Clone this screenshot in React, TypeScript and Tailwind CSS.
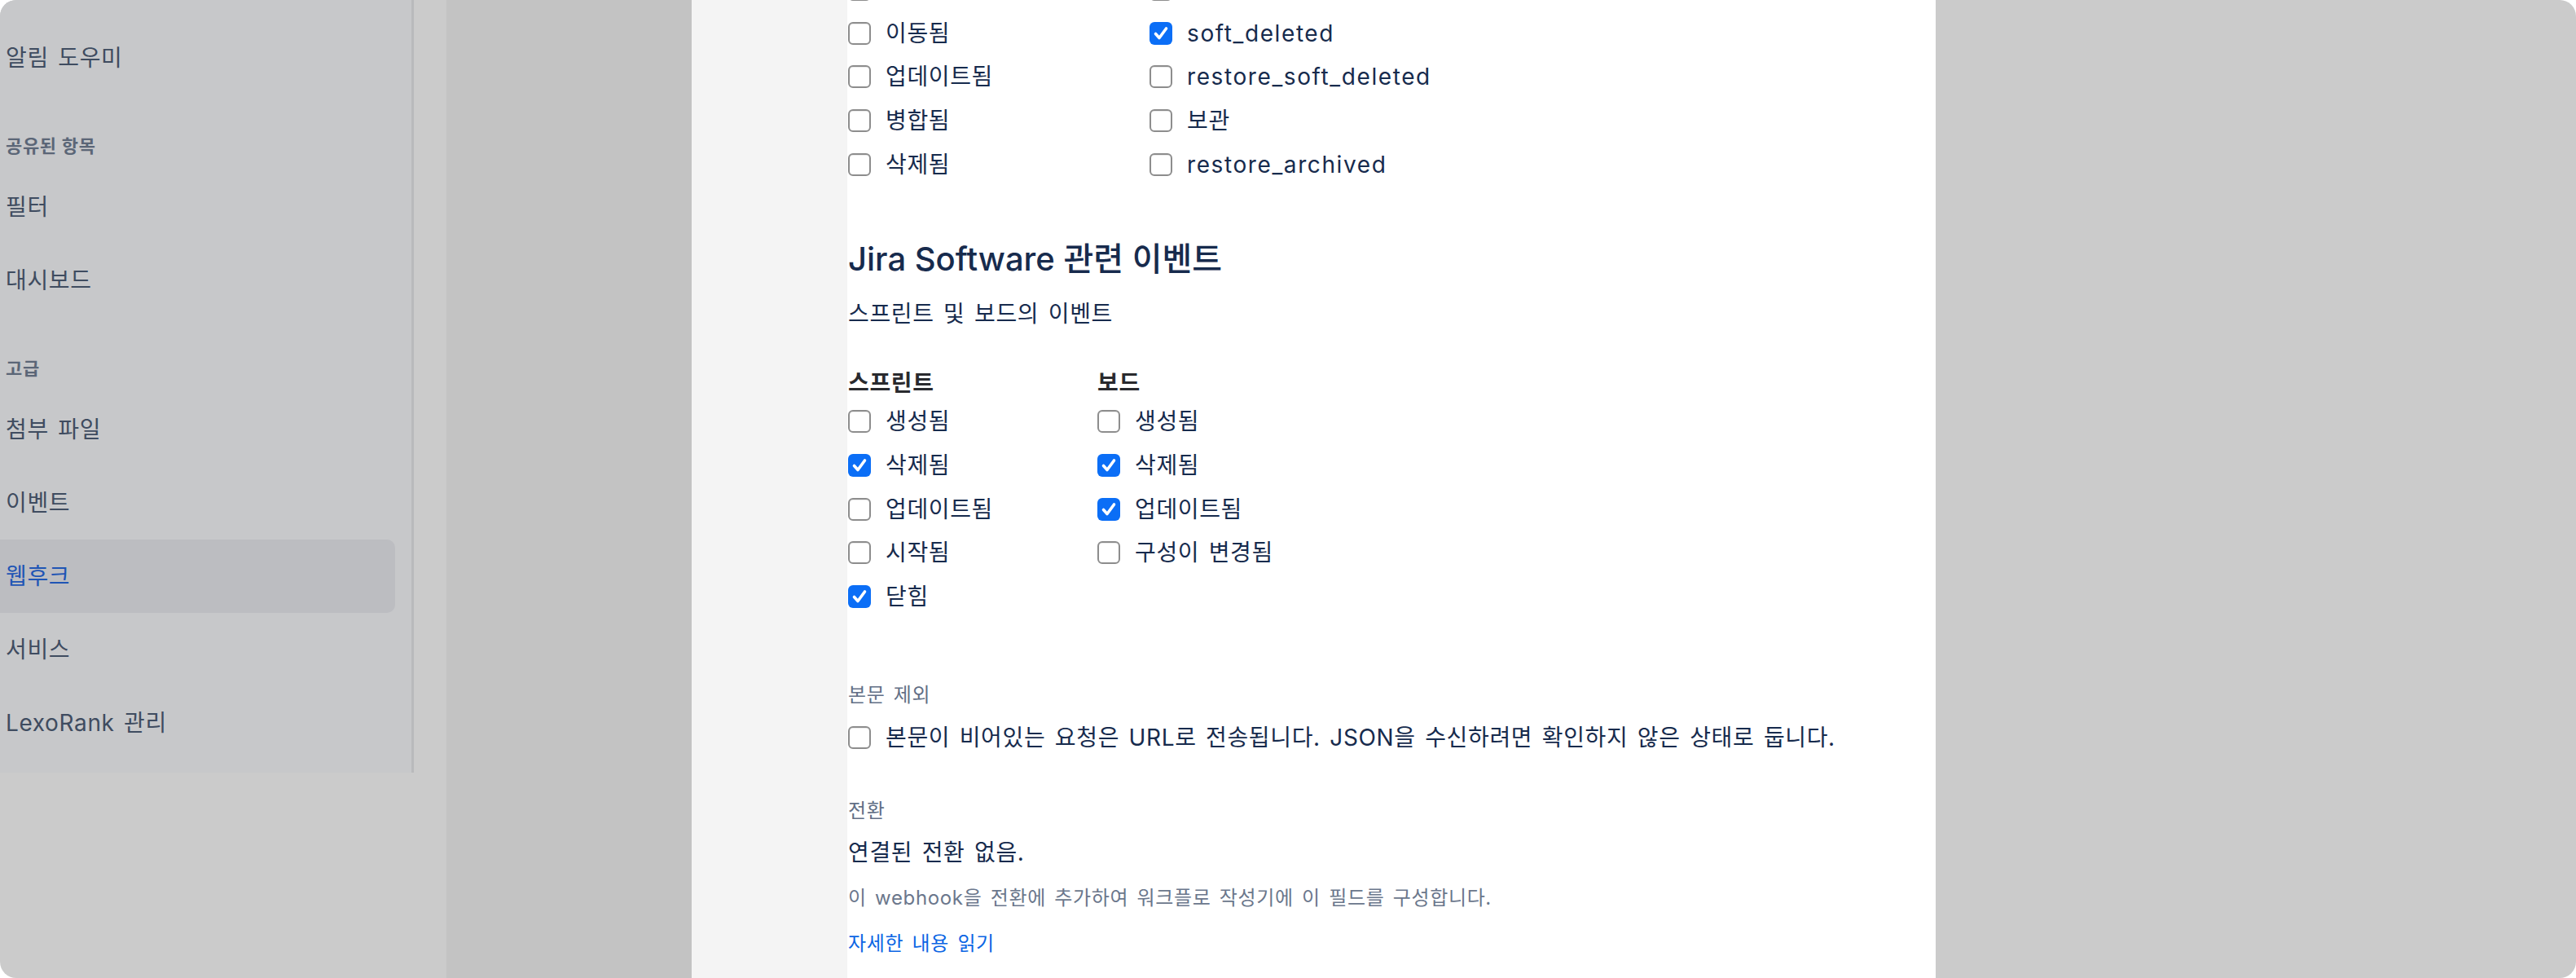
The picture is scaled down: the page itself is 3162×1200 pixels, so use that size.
import React from 'react';

type Item = { label: string; checked?: boolean; latin?: boolean };

const Box: React.FC<{ checked?: boolean }> = ({ checked }) =>
  checked ? (
    <span className="flex h-[28px] w-[28px] shrink-0 items-center justify-center rounded-[6px] bg-[#0b6ef6]">
      <svg viewBox="0 0 28 28" className="h-[28px] w-[28px]">
        <path d="M7.5 14.5 L12 19.5 L20.5 8" fill="none" stroke="#ffffff" strokeWidth="3.6" strokeLinecap="round" strokeLinejoin="round" />
      </svg>
    </span>
  ) : (
    <span className="h-[28px] w-[28px] shrink-0 rounded-[6px] border-[2.5px] border-[#8d8d8d] bg-white shadow-[inset_0_1px_1px_rgba(0,0,0,0.08)]" />
  );

const Row: React.FC<Item> = ({ label, checked, latin }) => (
  <div className="flex h-[53.7px] items-center gap-[18px] text-[28px] leading-[36px] text-[#172b4d]">
    <Box checked={checked} />
    <span className={latin ? 'whitespace-nowrap tracking-[1.6px]' : 'whitespace-nowrap [word-spacing:3px]'}>{label}</span>
  </div>
);

const NavItem: React.FC<{ label: string; active?: boolean }> = ({ label, active }) => (
  <div
    className={
      active
        ? 'flex h-[90px] items-center rounded-r-[10px] bg-[#bcbdc1] pl-[7px] text-[28px] text-[#1f55b5]'
        : 'flex h-[90px] items-center pl-[7px] text-[28px] text-[#3f4c60] [word-spacing:3px]'
    }
  >
    {label}
  </div>
);

const NavHeading: React.FC<{ label: string }> = ({ label }) => (
  <div className="flex h-[93px] items-end pb-[16px] pl-[7px] text-[22px] font-semibold leading-[28px] text-[#5b6677]">
    {label}
  </div>
);

const issueLeft: Item[] = [
  { label: '생성됨' },
  { label: '이동됨' },
  { label: '업데이트됨' },
  { label: '병합됨' },
  { label: '삭제됨' },
];

const issueRight: Item[] = [
  { label: '복원됨' },
  { label: 'soft_deleted', checked: true, latin: true },
  { label: 'restore_soft_deleted', latin: true },
  { label: '보관' },
  { label: 'restore_archived', latin: true },
];

const sprint: Item[] = [
  { label: '생성됨' },
  { label: '삭제됨', checked: true },
  { label: '업데이트됨' },
  { label: '시작됨' },
  { label: '닫힘', checked: true },
];

const board: Item[] = [
  { label: '생성됨' },
  { label: '삭제됨', checked: true },
  { label: '업데이트됨', checked: true },
  { label: '구성이 변경됨' },
];

export default function App() {
  return (
    <div className="h-[1200px] w-[3162px] bg-white font-['Inter','Noto_Sans_CJK_KR',sans-serif] tracking-[0.04em]">
      <div className="flex h-full overflow-hidden rounded-[20px]">
        {/* left rail with settings sidebar */}
        <div className="w-[548px] shrink-0 bg-[#cbcbcb]">
          <div className="h-[948px] w-[508px] border-r-[3px] border-[#b9babc] bg-[#c7c8ca] pr-[20px] pt-[26px]">
            <NavItem label="알림 도우미" />
            <NavHeading label="공유된 항목" />
            <NavItem label="필터" />
            <NavItem label="대시보드" />
            <NavHeading label="고급" />
            <NavItem label="첨부 파일" />
            <NavItem label="이벤트" />
            <NavItem label="웹후크" active />
            <NavItem label="서비스" />
            <NavItem label="LexoRank 관리" />
          </div>
        </div>

        <div className="w-[301px] shrink-0 bg-[#c3c3c3]" />

        {/* dialog */}
        <div className="flex w-[1527px] shrink-0">
          <div className="w-[191px] shrink-0 bg-[#f4f4f4]" />
          <div className="flex-1 bg-white pl-px">
            <div className="-mt-[40px] grid grid-cols-[370px_1fr]">
              <div>
                {issueLeft.map((i) => (
                  <Row key={i.label} {...i} />
                ))}
              </div>
              <div>
                {issueRight.map((i) => (
                  <Row key={i.label} {...i} />
                ))}
              </div>
            </div>

            <h2 className="mt-[66px] text-[40px] font-medium leading-[48px] tracking-[0px] text-[#172b4d]">
              Jira Software 관련 이벤트
            </h2>
            <p className="mt-[23px] text-[28px] leading-[40px] text-[#172b4d] [word-spacing:3px]">스프린트 및 보드의 이벤트</p>

            <div className="mt-[45px] grid grid-cols-[306px_1fr]">
              <div>
                <div className="text-[28px] font-bold leading-[40px] text-[#292a2e]">스프린트</div>
                {sprint.map((i) => (
                  <Row key={i.label} {...i} />
                ))}
              </div>
              <div>
                <div className="text-[28px] font-bold leading-[40px] text-[#292a2e]">보드</div>
                {board.map((i) => (
                  <Row key={i.label} {...i} />
                ))}
              </div>
            </div>

            <div className="mt-[78px] text-[24px] leading-[32px] text-[#626f86] [word-spacing:3px]">본문 제외</div>
            <div className="mt-[16px] flex h-[40px] items-center gap-[18px] text-[28px] text-[#172b4d]">
              <Box />
              <span className="whitespace-nowrap [word-spacing:3px]">
                본문이 비어있는 요청은 URL로 전송됩니다. JSON을 수신하려면 확인하지 않은 상태로 둡니다.
              </span>
            </div>

            <div className="mt-[54px] text-[24px] leading-[32px] text-[#626f86]">전환</div>
            <div className="mt-[15px] text-[28px] leading-[40px] text-[#172b4d] [word-spacing:3px]">연결된 전환 없음.</div>
            <div className="mt-[20px] text-[24px] leading-[32px] text-[#6b778c] [word-spacing:3px]">
              이 webhook을 전환에 추가하여 워크플로 작성기에 이 필드를 구성합니다.
            </div>
            <a className="mt-[24px] block text-[24px] leading-[32px] text-[#0c66e4] [word-spacing:3px]">자세한 내용 읽기</a>
          </div>
        </div>

        <div className="flex-1 bg-[#cbcbcb]" />
      </div>
    </div>
  );
}
